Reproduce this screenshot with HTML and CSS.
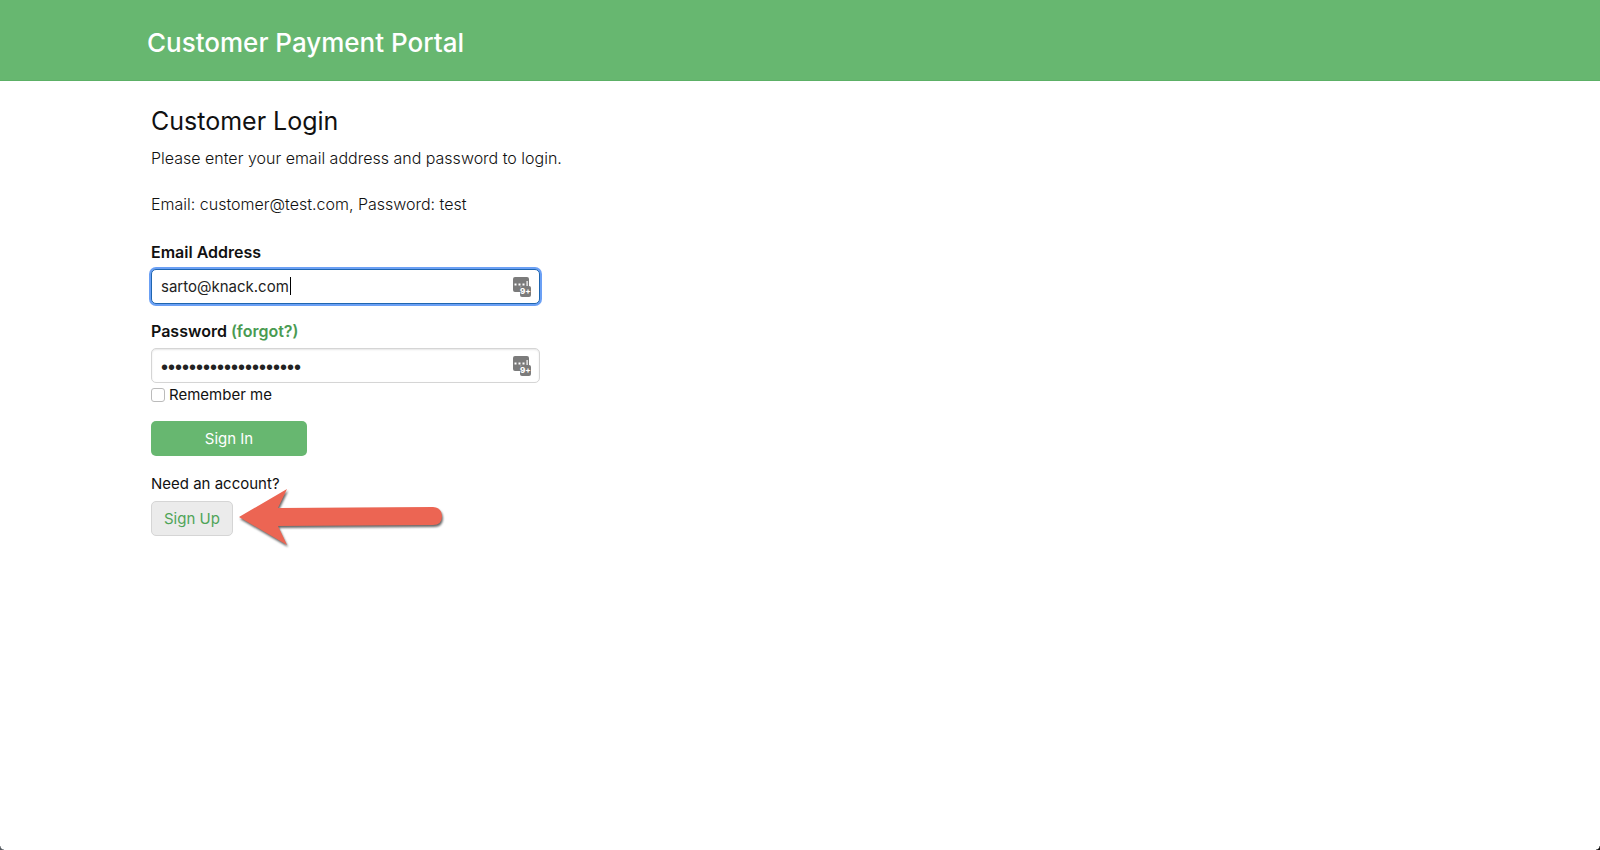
FILE: index.html
```html
<!DOCTYPE html>
<html lang="en">
<head>
  <meta charset="UTF-8">
  <meta name="viewport" content="width=device-width, initial-scale=1.0">
  <title>Customer Payment Portal</title>
  <link rel="stylesheet" href="styles.css">
</head>
<body>
  <header class="header">
    <h1>Customer Payment Portal</h1>
  </header>

  <main class="container">
    <h2>Customer Login</h2>
    <p class="description">Please enter your email address and password to login.<br><br>Email: customer@test.com, Password: test</p>

    <!-- Login form -->
    <form class="login-form">
      <label class="label" for="email">Email Address</label>
      <div class="control">
        <input class="input focused" type="text" id="email" value="sarto@knack.com">
        <span class="caret"></span>
        <svg class="key-icon" viewBox="0 0 18 20">
          <path fill="#7b7b7b" d="M2 0h12a2 2 0 0 1 2 2v7H9a2 2 0 0 0-2 2v4H2a2 2 0 0 1-2-2V2a2 2 0 0 1 2-2z"/>
          <rect x="7" y="9" width="11" height="11" rx="2" fill="#7b7b7b"/>
          <path fill="#fff" d="M1.5 6.5h2v2h-2zM5.5 6.5h2v2h-2zM9.5 6.5h2v2h-2zM13.5 4h1.2v5h-1.2z"/>
          <text class="key-count" x="7" y="17">9+</text>
        </svg>
      </div>

      <label class="label" for="password">Password <a href="#">(forgot?)</a></label>
      <div class="control">
        <input class="input" type="password" id="password" value="customerpassword1234">
        <svg class="key-icon" viewBox="0 0 18 20">
          <path fill="#7b7b7b" d="M2 0h12a2 2 0 0 1 2 2v7H9a2 2 0 0 0-2 2v4H2a2 2 0 0 1-2-2V2a2 2 0 0 1 2-2z"/>
          <rect x="7" y="9" width="11" height="11" rx="2" fill="#7b7b7b"/>
          <path fill="#fff" d="M1.5 6.5h2v2h-2zM5.5 6.5h2v2h-2zM9.5 6.5h2v2h-2zM13.5 4h1.2v5h-1.2z"/>
          <text class="key-count" x="7" y="17">9+</text>
        </svg>
      </div>

      <label class="remember"><input type="checkbox" class="checkbox">Remember me</label>
      <button type="submit" class="button primary">Sign In</button>
    </form>

    <!-- Registration -->
    <p class="need-account">Need an account?</p>
    <div class="register">
      <button type="button" class="button secondary">Sign Up</button>
      <svg class="arrow" viewBox="0 0 208 62">
        <path fill="#ec6553" d="M0 29 48 1 39 20 194 19Q203 20 203 28 203 37 194 37L39 38 48 57Z"/>
      </svg>
    </div>
  </main>

  <span class="corner corner-left"></span>
  <span class="corner corner-right"></span>
</body>
</html>
```

FILE: styles.css
```css
* {
  box-sizing: border-box;
}
body {
  margin: 0;
  min-height: 100vh;
  position: relative;
  overflow: hidden;
  background: #fff;
  color: #111;
  font-family: Inter, sans-serif;
  font-size: 15px;
  line-height: 24px;
}
.header {
  padding: 27px 147px 21px;
  background: #67b770;
  border-bottom: 1px solid #5cb066;
}
h1 {
  margin: 0;
  color: #fff;
  font-size: 26px;
  font-weight: 500;
  line-height: 32px;
}
.container {
  padding: 24px 151px;
}
h2 {
  margin: 0 0 10px;
  font-size: 25px;
  font-weight: 400;
  line-height: 32px;
}
.description {
  margin: 0 0 24px;
  color: #111;
  font-size: 16px;
  font-weight: 300;
  line-height: 23px;
}
.login-form {
  max-width: 389px;
}
.label {
  display: block;
  margin-bottom: 5px;
  font-size: 16px;
  font-weight: 600;
}
.label a {
  color: #4a9b52;
  text-decoration: none;
}
.control {
  position: relative;
  margin-bottom: 15px;
}
.input {
  display: block;
  width: 100%;
  height: 35px;
  padding: 0 40px 0 9px;
  border: 1px solid #d5d5d5;
  border-radius: 5px;
  outline: none;
  background: #fff;
  box-shadow: inset 0 1px 2px rgba(0, 0, 0, 0.1);
  color: #222;
  font-family: inherit;
  font-size: 15px;
}
.input[type="password"] {
  padding-top: 4px;
  font-family: "Liberation Sans", sans-serif;
  font-size: 20px;
}
.input.focused {
  border-color: #1f66b0;
  box-shadow: 0 0 0 2px #6ba0f5;
}
.caret {
  position: absolute;
  top: 8px;
  left: 139px;
  width: 1px;
  height: 18px;
  background: #000;
}
.key-icon {
  position: absolute;
  top: 8px;
  right: 9px;
  width: 18px;
  height: 20px;
}
.key-count {
  fill: #fff;
  font-size: 8px;
  font-weight: 800;
}
.remember {
  display: flex;
  align-items: center;
  gap: 4px;
  margin: -15px 0 14px;
}
.checkbox {
  appearance: none;
  width: 14px;
  height: 14px;
  margin: 0;
  border: 1px solid #bbb;
  border-radius: 3px;
  background: #fff;
}
.button {
  height: 35px;
  border: 1px solid transparent;
  border-radius: 5px;
  font-family: inherit;
  font-size: 15px;
  cursor: pointer;
}
.primary {
  display: block;
  width: 156px;
  background: #67b770;
  color: #fff;
}
.secondary {
  padding: 0 12px;
  border-color: #d5d5d5;
  background: #ebebeb;
  color: #4fa458;
}
.need-account {
  margin: 16px 0 5px;
}
.register {
  position: relative;
}
.arrow {
  position: absolute;
  top: -13px;
  left: 88px;
  width: 208px;
  height: 62px;
  filter: drop-shadow(1px 2px 1px rgba(0, 0, 0, 0.6));
}
.corner {
  position: absolute;
  bottom: 0;
  width: 4px;
  height: 4px;
}
.corner-left {
  left: 0;
  background: radial-gradient(circle at top right, transparent 3px, #555a60 4px);
}
.corner-right {
  right: 0;
  background: radial-gradient(circle at top left, transparent 3px, #111 4px);
}
```
